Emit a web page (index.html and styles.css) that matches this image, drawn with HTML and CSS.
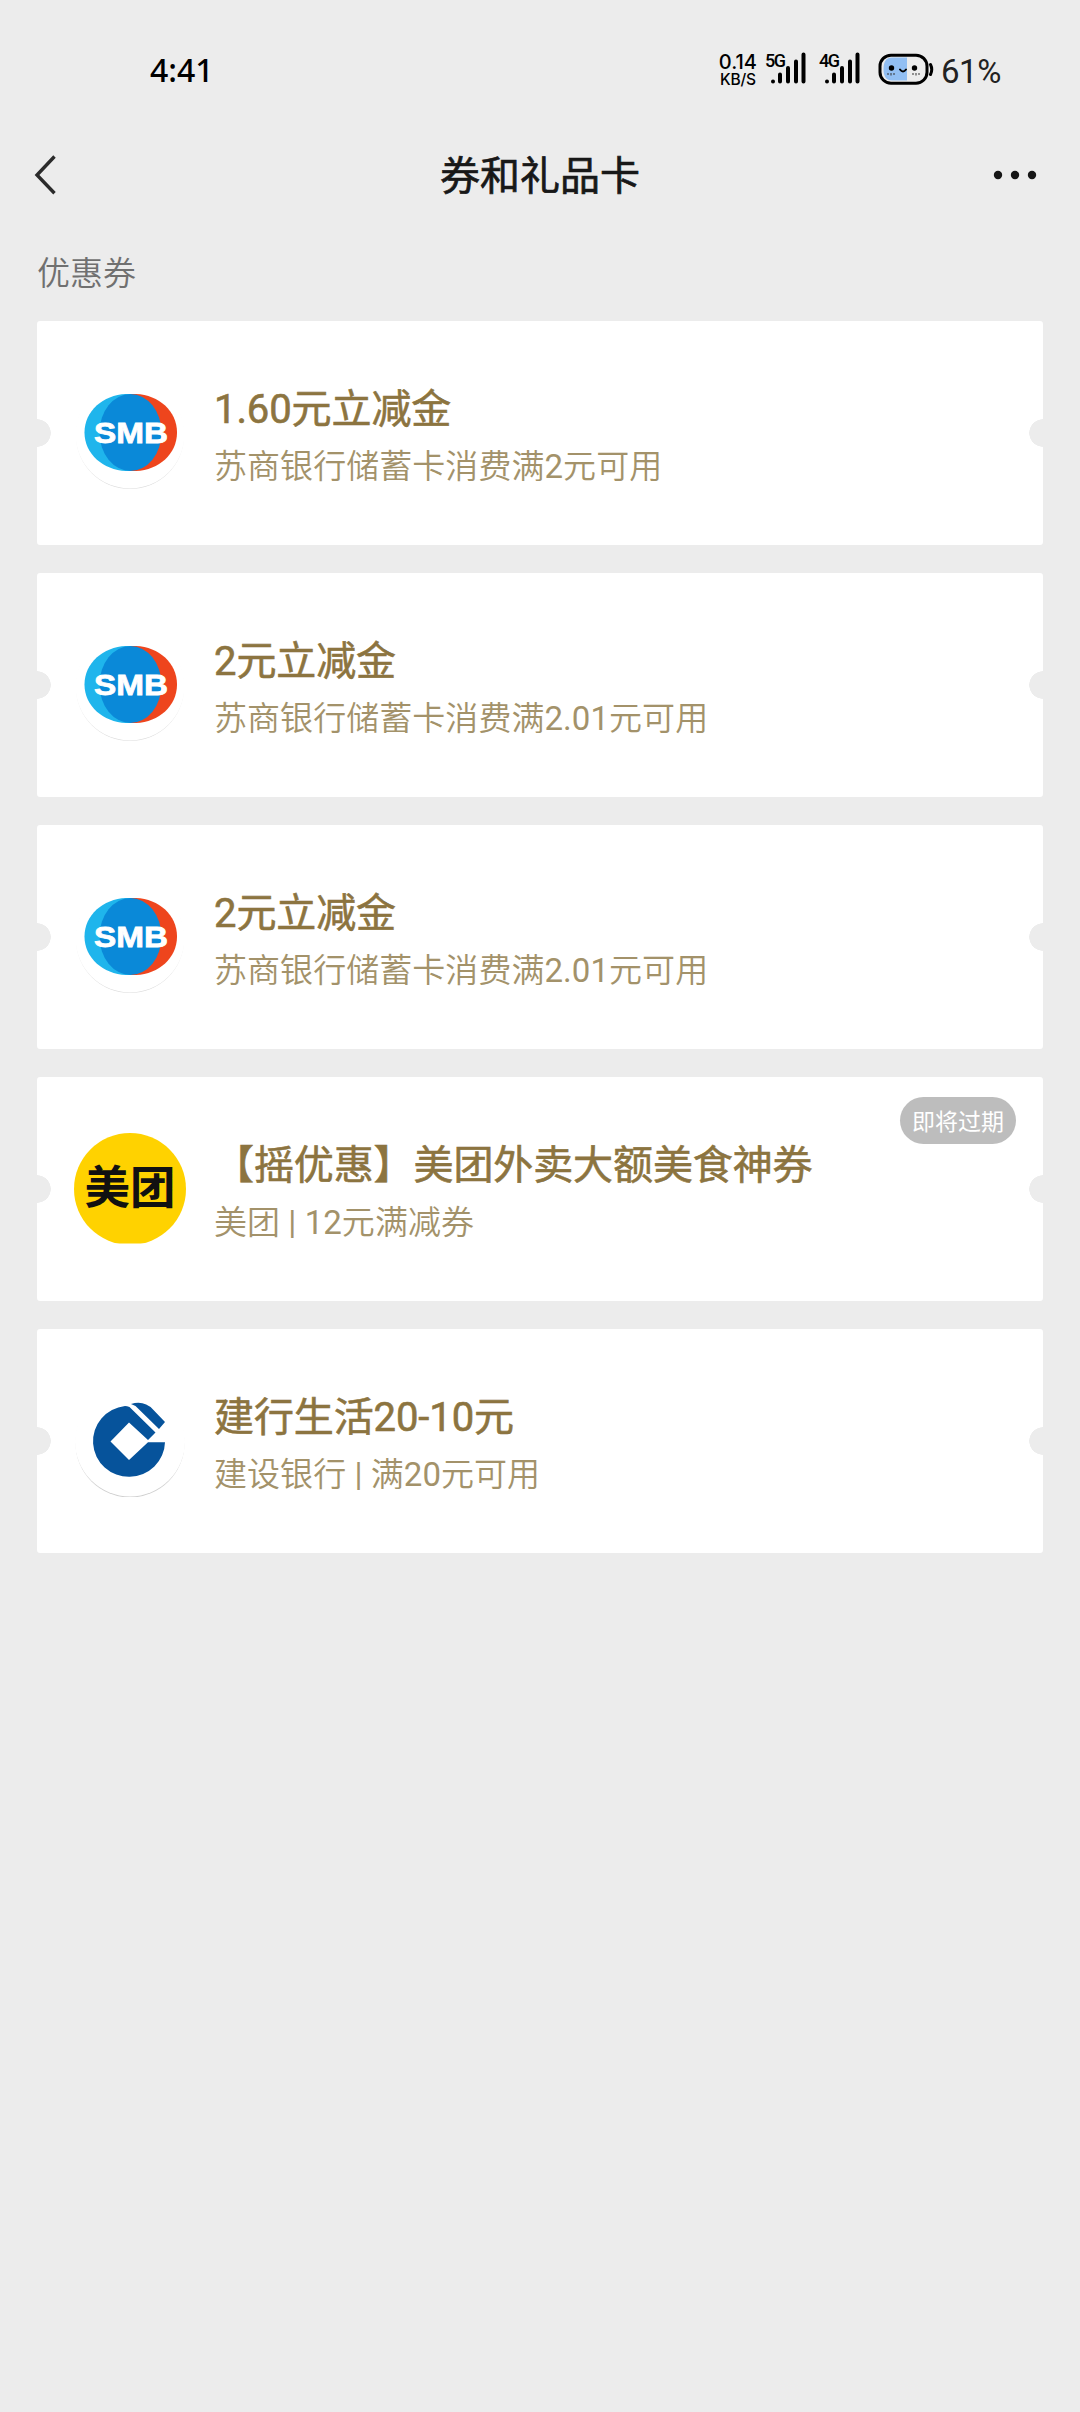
FILE: index.html
```html
<!DOCTYPE html>
<html lang="zh-CN">
<head>
<meta charset="utf-8">
<title>券和礼品卡</title>
<link rel="stylesheet" href="styles.css">
</head>
<body>
<svg width="0" height="0" class="defs">
  <symbol id="smb" viewBox="0 0 112 112">
    <circle cx="56" cy="58" r="54" fill="#dedede"/>
    <circle cx="56" cy="56.800" r="54.600" fill="#fff"/>
    <path d="M60 17H52C29 18 10.500 34 10.500 55.500S29 93 52 94H60z" fill="#1fb5ec"/>
    <path d="M57 17H62C85 18 103 34 103 55.500S85 93 62 94H57z" fill="#ee451d"/>
    <ellipse cx="56.500" cy="55.500" rx="31" ry="38.500" fill="#0a89d8"/>
  </symbol>
  <symbol id="bars" viewBox="0 0 38 36">
    <g stroke="#000" stroke-width="4" stroke-linecap="round">
      <path d="M5 31.500v.01M12 24.500v7M20 18v13.500M28 11.500v20M35.500 4.500v27"/>
    </g>
  </symbol>
</svg>

<header class="status">
  <span class="clock">4:41</span>
  <div class="indicators">
    <div class="speed"><span class="rate">0.14</span><span class="unit">KB/S</span></div>
    <div class="signal"><svg class="bars"><use href="#bars"/></svg><span class="net">5G</span></div>
    <div class="signal"><svg class="bars"><use href="#bars"/></svg><span class="net">4G</span></div>
    <svg class="battery" viewBox="0 0 56 34">
      <path d="M14 4.500h15v23H14Q5.500 27.500 5.500 16T14 4.500z" fill="#92bff3"/>
      <rect x="2" y="2.200" width="47" height="28" rx="11" fill="none" stroke="#000" stroke-width="3"/>
      <path d="M52.500 11.500q2.500 5 0 10" fill="none" stroke="#000" stroke-width="3" stroke-linecap="round"/>
      <circle cx="13.500" cy="15" r="2.700"/><circle cx="36.500" cy="15" r="2.700"/>
      <path d="M22 16.500q3 4 6 0" fill="none" stroke="#000" stroke-width="2" stroke-linecap="round"/>
      <path d="M10 20v2M13 20v2.500M16 20v2M35 20v2M38 20v2.500M41 20v2" stroke="#333" stroke-width="1"/>
    </svg>
    <span class="percent">61%</span>
  </div>
</header>

<nav class="navbar">
  <svg class="back" viewBox="0 0 24 42"><path d="M20.500 2.500L3 21l17.500 18.200" fill="none" stroke="#2b2b2b" stroke-width="3.400"/></svg>
  <h1 class="page-title">券和礼品卡</h1>
  <svg class="more" viewBox="0 0 44 12"><g fill="#161616"><circle cx="5" cy="6" r="4.200"/><circle cx="22" cy="6" r="4.200"/><circle cx="39" cy="6" r="4.200"/></g></svg>
</nav>

<main class="content">
  <h2 class="section">优惠券</h2>
  <div class="list">
    <article class="card">
      <svg class="logo"><use href="#smb"/><text class="smb-text" x="20" y="66" textLength="74" lengthAdjust="spacingAndGlyphs">SMB</text></svg>
      <div class="info"><h3 class="name">1.60元立减金</h3><p class="desc">苏商银行储蓄卡消费满2元可用</p></div>
    </article>
    <article class="card">
      <svg class="logo"><use href="#smb"/><text class="smb-text" x="20" y="66" textLength="74" lengthAdjust="spacingAndGlyphs">SMB</text></svg>
      <div class="info"><h3 class="name">2元立减金</h3><p class="desc">苏商银行储蓄卡消费满2.01元可用</p></div>
    </article>
    <article class="card">
      <svg class="logo"><use href="#smb"/><text class="smb-text" x="20" y="66" textLength="74" lengthAdjust="spacingAndGlyphs">SMB</text></svg>
      <div class="info"><h3 class="name">2元立减金</h3><p class="desc">苏商银行储蓄卡消费满2.01元可用</p></div>
    </article>
    <article class="card">
      <svg class="logo" viewBox="0 0 112 112">
        <clipPath id="mt-clip"><rect width="112" height="110.500"/></clipPath>
        <circle cx="56" cy="56" r="56" fill="#ffd200" clip-path="url(#mt-clip)"/>
        <text class="mt-text" x="10.500" y="71" textLength="91" lengthAdjust="spacingAndGlyphs">美团</text>
      </svg>
      <div class="info"><h3 class="name">【摇优惠】美团外卖大额美食神券</h3><p class="desc">美团 | 12元满减券</p></div>
      <span class="badge">即将过期</span>
    </article>
    <article class="card">
      <svg class="logo" viewBox="0 0 112 112">
        <circle cx="56" cy="58" r="54.500" fill="#d0d0d0"/>
        <circle cx="56" cy="56.400" r="55" fill="#fff"/>
        <g fill="#06539b" transform="translate(0 1.500)">
          <path d="M51 19.500Q53 19.500 55.500 20.500L81.500 46L74 53.500L55 36L36.500 55L55 73.500L74 55.700H91A36 35.500 0 1 1 51 19.500z"/>
          <path d="M57 17.500Q70 13.500 79 23L91 35.500L85 42.500L61.500 19.500z"/>
        </g>
      </svg>
      <div class="info"><h3 class="name">建行生活20-10元</h3><p class="desc">建设银行 | 满20元可用</p></div>
    </article>
  </div>
</main>
</body>
</html>
```
FILE: styles.css
```css
* { box-sizing: border-box; }
body {
  margin: 0;
  min-height: 2412px;
  background: #ececec;
  font-family: Roboto, "Noto Sans CJK SC", sans-serif;
  color: #000;
}
h1, h2, h3, p { margin: 0; white-space: nowrap; }
.defs { position: absolute; }

.status {
  height: 132px;
  padding: 50px 79px 0 150px;
  display: flex;
  justify-content: space-between;
  align-items: flex-start;
}
.clock { font: 500 32px/40px "Noto Sans", sans-serif; }
.indicators { display: flex; align-items: flex-start; }
.speed {
  width: 40px;
  padding-top: 3px;
  display: flex;
  flex-direction: column;
  align-items: center;
  font-family: Inter, sans-serif;
  font-weight: 500;
}
.rate { font-size: 20px; line-height: 19px; }
.unit { font-size: 15.5px; line-height: 16px; letter-spacing: -0.2px; }
.signal { position: relative; width: 42px; height: 36px; margin-left: 8px; }
.signal + .signal { margin-left: 12px; }
.bars { display: block; width: 38px; height: 36px; margin-left: 2px; }
.net {
  position: absolute;
  left: -1px;
  top: 2px;
  font: 500 18px/18px Roboto, sans-serif;
  letter-spacing: -1.4px;
}
.battery { width: 56px; height: 34px; margin: 3px 7px 0 16px; }
.percent { font-size: 33px; line-height: 44px; letter-spacing: -0.4px; color: #222; }

.navbar {
  height: 90px;
  padding: 0 43px 0 34px;
  display: flex;
  align-items: center;
  justify-content: space-between;
}
.back { width: 24px; height: 42px; margin: 0 20px 5px 0; }
.page-title {
  flex: 1;
  padding-left: 9px;
  text-align: center;
  font-size: 40px;
  line-height: 60px;
  font-weight: 400;
  -webkit-text-stroke: 0.7px;
  color: #181818;
}
.more { width: 44px; height: 12px; margin-bottom: 4px; }

.content { padding: 27px 37px 0; }
.section, .desc {
  font-family: Roboto, "Noto Sans CJK SC DemiLight", "Noto Sans CJK SC", sans-serif;
  font-size: 33px;
  font-weight: 400;
}
.section { line-height: 50px; color: #707070; }
.list { margin-top: 22px; display: flex; flex-direction: column; gap: 28px; }
.card {
  position: relative;
  height: 224px;
  padding-left: 37px;
  display: flex;
  align-items: center;
  gap: 28px;
  border-radius: 3px;
  background: radial-gradient(circle 14px at 0 50%, #ececec 13.5px, transparent 14px),
    radial-gradient(circle 14px at 100% 50%, #ececec 13.5px, transparent 14px), #fff;
}
.logo { width: 112px; height: 112px; flex: none; }
.smb-text { font: 700 30px "Liberation Sans", sans-serif; fill: #fff; stroke: #fff; stroke-width: 0.8px; }
.mt-text { font: 700 45px "Noto Sans CJK SC", sans-serif; fill: #111; }
.info { padding-top: 10px; }
.name {
  font-size: 40px;
  line-height: 58px;
  font-weight: 400;
  letter-spacing: -0.1px;
  -webkit-text-stroke: 0.6px;
  color: #8c7440;
}
.desc { line-height: 56px; letter-spacing: 0.05px; color: #a3926a; }
.badge {
  position: absolute;
  top: 20px;
  right: 27px;
  width: 116px;
  height: 47px;
  border-radius: 24px;
  background: #bdbdbd;
  color: #fff;
  font-size: 23px;
  line-height: 51px;
  text-align: center;
}
```
